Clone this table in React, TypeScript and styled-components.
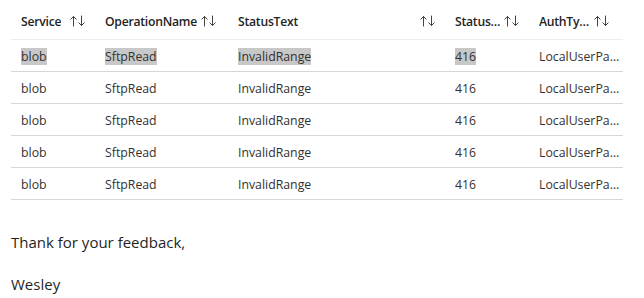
import React from "react";
import styled, { createGlobalStyle } from "styled-components";

const Global = createGlobalStyle`
  html, body { margin: 0; padding: 0; background: #ffffff; }
  body { font-family: "Segoe UI", "Open Sans", "Noto Sans", sans-serif; }
`;

const Page = styled.div`
  padding: 0 21px 0 11px;
  width: 644px;
  box-sizing: border-box;
`;

const Table = styled.div`
  display: grid;
  grid-template-columns: 84px 133px 217px 84px 94px;
  width: 612px;
`;

const HeadCell = styled.div<{ $padRight?: number }>`
  display: flex;
  align-items: center;
  height: 40px;
  box-sizing: border-box;
  padding: 3px ${(p) => p.$padRight ?? 9}px 0 10px;
  border-bottom: 1px solid #ececec;
  font-size: 12.2px;
  letter-spacing: -0.25px;
  font-weight: 600;
  color: #242424;
  white-space: nowrap;
  overflow: hidden;
`;

const HeadLabel = styled.span`
  overflow: hidden;
  text-overflow: ellipsis;
  min-width: 0;
`;

const SortIcon = styled.svg<{ $tight?: boolean }>`
  flex: none;
  margin-left: ${(p) => (p.$tight ? "2px" : "auto")};
  padding-left: 2px;
`;

const Cell = styled.div<{ $padRight?: number }>`
  display: flex;
  align-items: center;
  height: 32px;
  box-sizing: border-box;
  padding: 1px ${(p) => p.$padRight ?? 10}px 0 10px;
  border-bottom: 1px solid #d6d6d6;
  font-size: 12.3px;
  color: #323130;
  white-space: nowrap;
  overflow: hidden;
`;

const CellText = styled.span<{ $sel?: boolean }>`
  display: block;
  line-height: 17px;
  background: ${(p) => (p.$sel ? "#c8c8c8" : "transparent")};
  overflow: hidden;
  text-overflow: ellipsis;
  min-width: 0;
`;

const Para = styled.p`
  margin: 0;
  font-size: 15px;
  line-height: 22px;
  color: #1f1f1f;
`;

const Text = styled.div`
  display: flex;
  flex-direction: column;
  gap: 20px;
  padding-top: 31px;
`;

const Sort = ({ tight }: { tight?: boolean }) => (
  <SortIcon $tight={tight} width="16" height="12" viewBox="0 0 16 12" fill="none" stroke="#424242" strokeWidth="1" strokeLinecap="round" strokeLinejoin="round">
    <path d="M3.5 11V1.5M0.8 4.2L3.5 1.5L6.2 4.2" />
    <path d="M11.5 1V10.5M8.8 7.8L11.5 10.5L14.2 7.8" />
  </SortIcon>
);

const headers: { label: string; tight?: boolean; pad?: number }[] = [
  { label: "Service" },
  { label: "OperationName", tight: true },
  { label: "StatusText" },
  { label: "StatusCode" },
  { label: "AuthType", pad: 13 },
];
const rows = Array.from({ length: 5 }, () => ["blob", "SftpRead", "InvalidRange", "416", "LocalUserPassword"]);

export default function App() {
  return (
    <>
      <Global />
      <Page>
        <Table>
          {headers.map((h) => (
            <HeadCell key={h.label} $padRight={h.pad}>
              <HeadLabel>{h.label}</HeadLabel>
              <Sort tight={h.tight} />
            </HeadCell>
          ))}
          {rows.map((r, i) =>
            r.map((v, j) => (
              <Cell key={`${i}-${j}`} $padRight={j === 4 ? 2 : undefined}>
                <CellText $sel={i === 0 && j < 4}>{v}</CellText>
              </Cell>
            ))
          )}
        </Table>
        <Text>
          <Para>Thank for your feedback,</Para>
          <Para>Wesley</Para>
        </Text>
      </Page>
    </>
  );
}
